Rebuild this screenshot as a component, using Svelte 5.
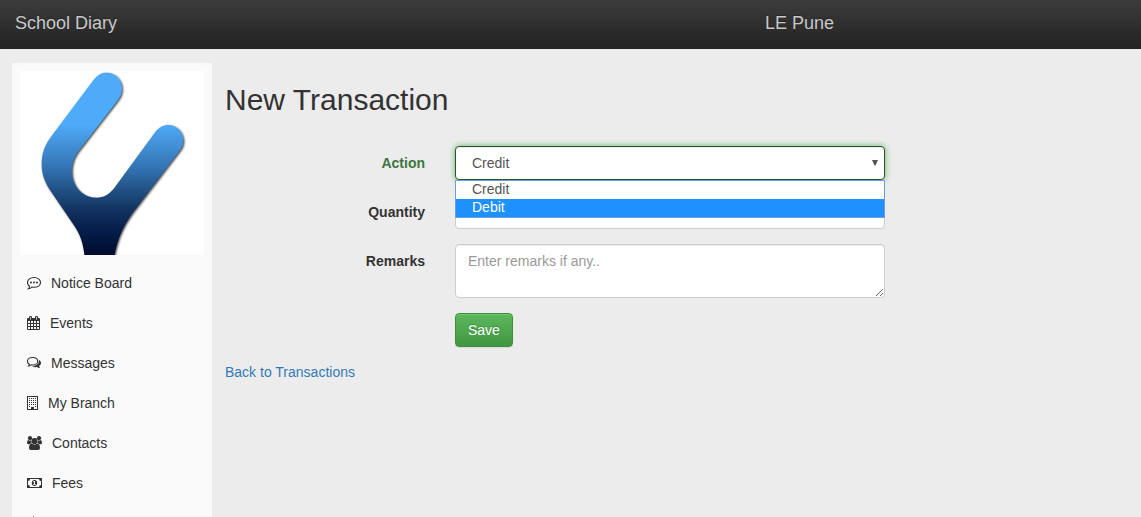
<script>
  const items = [
    { label: 'Notice Board', icon: 'comment', width: 14 },
    { label: 'Events', icon: 'calendar', width: 13 },
    { label: 'Messages', icon: 'comments', width: 14 },
    { label: 'My Branch', icon: 'building', width: 11 },
    { label: 'Contacts', icon: 'users', width: 15 },
    { label: 'Fees', icon: 'money', width: 15 }
  ];
  const options = ['Credit', 'Debit'];
  let selected = $state('Credit');
  let highlighted = $state('Debit');
</script>

<header class="navbar">
  <span class="brand">School Diary</span>
  <span class="branch">LE Pune</span>
</header>

<div class="page">
  <aside class="sidebar">
    <svg class="logo" viewBox="0 0 184 184" role="img" aria-label="Logo">
      <defs>
        <linearGradient id="fade" gradientUnits="userSpaceOnUse" x1="0" y1="0" x2="0" y2="184">
          <stop offset="0" stop-color="#4dabfa" />
          <stop offset=".29" stop-color="#4dabfa" />
          <stop offset=".39" stop-color="#4493da" />
          <stop offset=".51" stop-color="#3578b8" />
          <stop offset=".66" stop-color="#1f4d80" />
          <stop offset=".76" stop-color="#12315f" />
          <stop offset=".87" stop-color="#041d49" />
          <stop offset="1" stop-color="#000b2c" />
        </linearGradient>
        <filter id="shade" x="-10%" y="-10%" width="120%" height="120%" color-interpolation-filters="sRGB">
          <feDropShadow dx="1" dy="1" stdDeviation=".8" flood-color="#000" flood-opacity=".75" />
        </filter>
      </defs>
      <path
        fill="url(#fade)"
        filter="url(#shade)"
        d="M73.5 9 C78 3.5 82 1.7 86.7 1.7 C95 1.7 102 8.5 102 17 C102 22 100.8 25.5 98 29 L58.3 80.5 C54 86.5 52 92.500 52 100.500 C52 115 62.500 126.700 76.500 126.700 C84 126.700 90 123 95 116 L134.500 62 C138.500 56.500 143 54 148.300 54 C156.500 54 163.400 61 163.400 69.500 C163.400 73.500 162 77 159.500 80 L117.500 135.500 C105 151 97 166 93.500 190 L65 190 C64 174 60.500 164 54.500 155 L31 120.500 C25 111.500 21.700 103.500 21.700 94 C21.700 82 24.500 74.500 31.500 65 Z"
      />
    </svg>
    <nav>
      {#each items as item}
        <a href="#{item.icon}" class="item">
          <svg class="icon" width={item.width} height="14" viewBox="0 0 {item.width} 14" aria-hidden="true">
            {#if item.icon === 'comment'}
              <path d="M7 1.500C10.600 1.500 13.500 3.600 13.500 6.500S10.600 11.300 7 11.300C6.200 11.300 5.500 11.200 4.900 11.050C3.900 12 2.700 12.700 1.300 12.800C2 12.100 2.400 11.300 2.600 10.300C1.200 9.300.5 8 .5 6.500C.5 3.600 3.400 1.500 7 1.500Z" fill="none" stroke="currentColor" stroke-width="1.1" />
              <g fill="currentColor"><circle cx="4" cy="6.500" r="1" /><circle cx="7" cy="6.500" r="1" /><circle cx="10" cy="6.500" r="1" /></g>
            {:else if item.icon === 'calendar'}
              <path fill="currentColor" fill-rule="evenodd" d="M1 2H2V1.200Q2 0 3.200 0H3.800Q5 0 5 1.200V2H8V1.200Q8 0 9.200 0H9.800Q11 0 11 1.200V2H12Q13 2 13 3V13Q13 14 12 14H1Q0 14 0 13V3Q0 2 1 2ZM3.200 1V3.700H3.900V1ZM9.200 1V3.700H9.900V1ZM1 5V7H3V5ZM4 5V7H6V5ZM7 5V7H9V5ZM10 5V7H12V5ZM1 8V10H3V8ZM4 8V10H6V8ZM7 8V10H9V8ZM10 8V10H12V8ZM1 11V13H3V11ZM4 11V13H6V11ZM7 11V13H9V11ZM10 11V13H12V11Z" />
            {:else if item.icon === 'comments'}
              <path d="M5.500 1.500C8.500 1.500 10.700 3.100 10.700 5.200S8.500 9 5.500 9C4.900 9 4.400 8.900 4 8.800Q3 9.700 1.600 9.900Q2.200 9.200 2.400 8.300C1.200 7.700.5 6.500.5 5.200C.5 3.100 2.700 1.500 5.500 1.500Z" fill="none" stroke="currentColor" stroke-width="1.1" />
              <path fill="currentColor" d="M11.800 3.700C13.100 4.400 14 5.700 14 7C14 8.300 13.200 9.400 12 10.100Q12.200 11.200 13.300 12.200Q11.300 12.200 9.700 11.100C7.900 11.400 6.200 11.100 5 10.300C9 10.200 12.500 7.900 11.800 3.700Z" />
            {:else if item.icon === 'building'}
              <path fill="currentColor" fill-rule="evenodd" d="M0 0H11V14H0ZM1 1V13H4V11H7V13H10V1Z" />
              <path d="M2.500 2V12M4.500 2V10M6.500 2V10M8.500 2V12" fill="none" stroke="currentColor" stroke-dasharray="1 1" />
            {:else if item.icon === 'users'}
              <g fill="currentColor">
                <circle cx="3" cy="2.200" r="2.100" /><circle cx="12" cy="2.200" r="2.100" /><circle cx="7.500" cy="5" r="3.100" />
                <path d="M1.200 4Q3 5 4 4.300Q3.600 6 4.800 7.300Q3.200 7.400 2.500 8.200H1.300Q0 8.200 0 6.700Q0 4.500 1.200 4ZM13.800 4Q12 5 11 4.300Q11.400 6 10.200 7.300Q11.800 7.400 12.500 8.200H13.700Q15 8.200 15 6.700Q15 4.500 13.800 4ZM4.600 7.600Q7.500 9.500 10.400 7.600Q13 8 13 12Q13 14 11.200 14H3.800Q2 14 2 12Q2 8 4.600 7.600Z" />
              </g>
            {:else}
              <path fill="currentColor" fill-rule="evenodd" d="M0 2H15V12H0ZM3 3Q3 5 1 5V9Q3 9 3 11H12Q12 9 14 9V5Q12 5 12 3Z" />
              <path fill="currentColor" fill-rule="evenodd" d="M7.500 4C9.200 4 10.200 5.300 10.200 7S9.200 10 7.500 10S4.800 8.700 4.800 7S5.800 4 7.500 4ZM7 5L5.800 6L6.300 6.600L7 6.100V8H6V8.800H9V8H8V5Z" />
            {/if}
          </svg>
          <span>{item.label}</span>
        </a>
      {/each}
      <span class="item next"><i></i></span>
    </nav>
  </aside>

  <main>
    <h2>New Transaction</h2>
    <form onsubmit={(e) => e.preventDefault()}>
      <div class="row">
        <span class="label success">Action</span>
        <div class="field">
          <div class="control select">
            <span>{selected}</span>
            <svg width="6" height="6" viewBox="0 0 6 6" aria-hidden="true"><path d="M0 0H6L3.500 5.500H2.500Z" fill="#555" /></svg>
          </div>
          <div class="menu" role="listbox">
            {#each options as option}
              <div
                class="option"
                class:active={highlighted === option}
                role="option"
                tabindex="-1"
                aria-selected={selected === option}
                onmouseenter={() => (highlighted = option)}
                onmousedown={() => (selected = option)}
              >{option}</div>
            {/each}
          </div>
        </div>
      </div>
      <div class="row">
        <label class="label" for="quantity">Quantity</label>
        <input class="control" id="quantity" type="text" />
      </div>
      <div class="row">
        <label class="label" for="remarks">Remarks</label>
        <textarea class="control" id="remarks" placeholder="Enter remarks if any.."></textarea>
      </div>
      <div class="row">
        <span class="label"></span>
        <button type="submit">Save</button>
      </div>
    </form>
    <a class="back" href="#transactions">Back to Transactions</a>
  </main>
</div>

<style>
  :global(body) {
    background: #ececec;
    overflow: hidden;
  }
  :global(#app) {
    height: 517px;
    overflow: hidden;
    color: #333;
    font: 14px/20px 'Liberation Sans', Arial, sans-serif;
  }
  :global(#app *) {
    box-sizing: border-box;
  }
  .navbar {
    display: grid;
    grid-template-columns: 750px 1fr;
    height: 49px;
    padding: 13px 15px 0;
    background: linear-gradient(#3c3c3c, #222);
    color: #c8c8c8;
    font-size: 18px;
    text-shadow: 0 -1px 0 rgba(0, 0, 0, 0.25);
  }
  .page {
    display: flex;
    gap: 13px;
    padding: 14px 12px 0;
  }
  .sidebar {
    flex: none;
    width: 200px;
    height: 600px;
    padding: 8px;
    background: #fafafa;
  }
  .logo {
    display: block;
    width: 184px;
    height: 184px;
    margin-bottom: 8px;
    background: #fff;
  }
  .item {
    display: flex;
    align-items: center;
    gap: 10px;
    height: 40px;
    padding-left: 7px;
    color: #333;
    text-decoration: none;
  }
  .icon {
    flex: none;
  }
  .next {
    align-items: flex-start;
    padding: 13px 0 0 13px;
  }
  .next i {
    width: 1px;
    height: 8px;
    background: #777;
  }
  h2 {
    margin: 20px 0 30px;
    font-size: 30px;
    font-weight: 400;
    line-height: 33px;
  }
  .row {
    display: flex;
    align-items: flex-start;
    gap: 30px;
    margin-bottom: 15px;
  }
  .label {
    width: 200px;
    padding-top: 7px;
    font-weight: 700;
    text-align: right;
  }
  .success {
    color: #3c763d;
  }
  .field {
    position: relative;
  }
  .control {
    display: block;
    width: 430px;
    height: 34px;
    margin: 0;
    padding: 6px 12px;
    border: 1px solid #ccc;
    border-radius: 4px;
    outline: none;
    background: #fff;
    box-shadow: inset 0 1px 1px rgba(0, 0, 0, 0.075);
    color: #555;
    font: inherit;
  }
  textarea.control {
    height: 54px;
    resize: vertical;
  }
  textarea::placeholder {
    color: #999;
  }
  .select {
    display: flex;
    align-items: center;
    justify-content: space-between;
    padding: 6px 6px 6px 16px;
    border-color: #2b542c;
    box-shadow: inset 0 1px 1px rgba(0, 0, 0, 0.075), 0 0 6px #67b168;
  }
  .menu {
    position: absolute;
    top: 34px;
    left: 0;
    z-index: 1;
    width: 430px;
    height: 38px;
    border: 1px solid #6f9ee0;
    background: #fff;
  }
  .option {
    height: 18px;
    padding-left: 16px;
    line-height: 17px;
    color: #555;
  }
  .option.active {
    background: #1e90ff;
    color: #fff;
  }
  button {
    height: 34px;
    padding: 6px 12px;
    border: 1px solid #3e8f3e;
    border-radius: 4px;
    background: linear-gradient(#5cb85c, #419641);
    box-shadow: inset 0 1px 0 rgba(255, 255, 255, 0.15), 0 1px 1px rgba(0, 0, 0, 0.075);
    color: #fff;
    font: inherit;
    text-shadow: 0 -1px 0 rgba(0, 0, 0, 0.2);
  }
  .back {
    color: #337ab7;
    text-decoration: none;
  }
</style>
